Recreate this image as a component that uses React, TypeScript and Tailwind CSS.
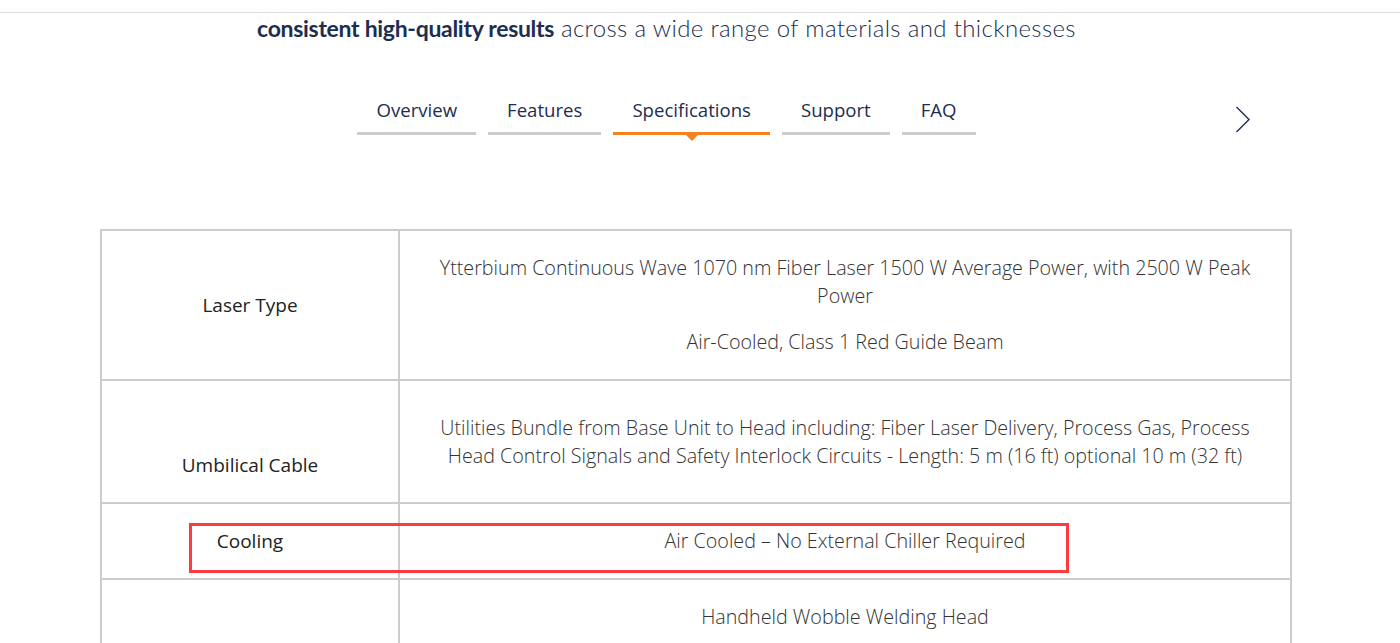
import React from "react";

const tabs = ["Overview", "Features", "Specifications", "Support", "FAQ"];

function Cell({ children, label }: { children: React.ReactNode; label?: boolean }) {
  return (
    <td
      className={
        "border-2 border-[#cccccc] align-middle text-center px-[30px] py-[23px] leading-[28px] " +
        (label ? "w-[298px] text-[#222222] font-normal text-[19px]" : "text-[#333333] font-light text-[19.7px]")
      }
    >
      {children}
    </td>
  );
}

export default function App() {
  return (
    <div className="w-[1400px] h-[643px] overflow-hidden bg-white" style={{ fontFamily: '"Open Sans", "Liberation Sans", sans-serif' }}>
      <div className="h-[13px] border-b border-[#dddddd]" />
      <div className="w-[1133px] ml-[100px] flex justify-center">
        <h2
          className="text-[24px] leading-[30px] text-[#1c2e4f] font-light tracking-[0.35px] whitespace-nowrap"
          style={{ fontFamily: '"Lato", "Liberation Sans", sans-serif' }}
        >
          <span className="font-bold text-[23px] tracking-[-0.3px]">consistent high-quality results</span> across a wide range of materials and thicknesses
        </h2>
      </div>
      <div className="flex mt-[55px]">
        <div className="w-[1133px] ml-[100px] flex justify-center gap-[12px]">
          {tabs.map((t) => {
            const active = t === "Specifications";
            return (
              <div key={t} className="relative">
                <div
                  className={
                    "px-[19px] pb-[10px] text-[18.6px] leading-[24px] text-[#1c2e4f] border-b-[3px] " +
                    (active ? "border-[#f5821f]" : "border-[#cccccc]")
                  }
                >
                  {t}
                </div>
                {active && (
                  <div className="absolute left-1/2 -translate-x-1/2 top-full w-0 h-0 border-l-[6px] border-r-[6px] border-t-[6px] border-l-transparent border-r-transparent border-t-[#f5821f]" />
                )}
              </div>
            );
          })}
        </div>
        <div className="ml-[2px] mt-[8px]">
          <svg width="16" height="28" viewBox="0 0 16 28" fill="none">
            <path d="M1.5 1 L14 13.5 L1.5 26" stroke="#1c2e4f" strokeWidth="1.4" />
          </svg>
        </div>
      </div>
      <div className="relative ml-[100px] w-[1192px] mt-[94px]">
        <table className="w-full border-collapse border-2 border-[#cccccc]">
          <tbody>
            <tr>
              <Cell label>Laser Type</Cell>
              <Cell>
                <p>Ytterbium Continuous Wave 1070 nm Fiber Laser 1500 W Average Power, with 2500 W Peak Power</p>
                <p className="mt-[18px]">Air-Cooled, Class 1 Red Guide Beam</p>
              </Cell>
            </tr>
            <tr>
              <Cell label>
                <p>&nbsp;</p>
                <p className="mt-[19px]">Umbilical Cable</p>
              </Cell>
              <Cell>
                <p>
                  Utilities Bundle from Base Unit to Head including: Fiber Laser Delivery, Process Gas, Process Head Control Signals and Safety Interlock Circuits - Length: 5 m (16 ft) optional 10 m (32 ft)
                </p>
              </Cell>
            </tr>
            <tr>
              <Cell label>Cooling</Cell>
              <Cell>Air Cooled – No External Chiller Required</Cell>
            </tr>
            <tr>
              <Cell label>{""}</Cell>
              <Cell>
                <p>Handheld Wobble Welding Head</p>
              </Cell>
            </tr>
          </tbody>
        </table>
        <div className="absolute left-[89px] top-[294px] w-[880px] h-[50px] border-[3px] border-[#ff3b3f] pointer-events-none" />
      </div>
    </div>
  );
}
